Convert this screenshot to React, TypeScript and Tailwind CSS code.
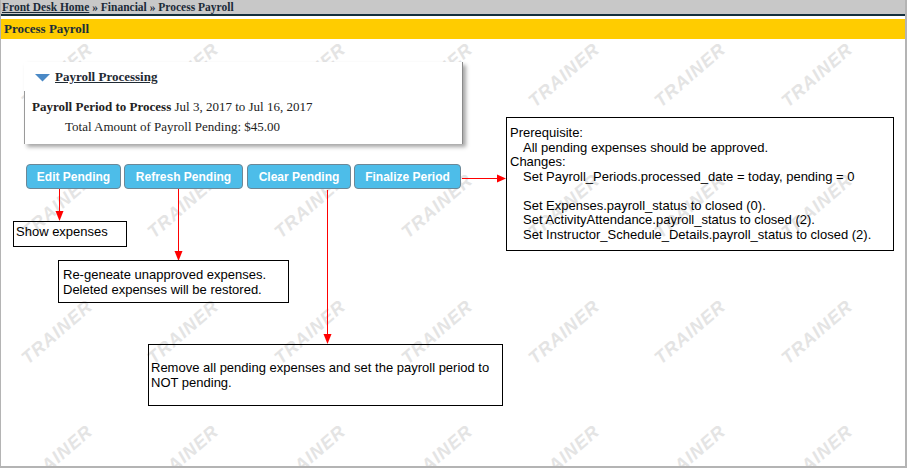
import React from "react";

const rows = [45, 176, 302, 427];
const cols = [94, 220, 347, 474, 601, 727, 854];

function Watermarks() {
  const items: { x: number; y: number; k: string }[] = [];
  rows.forEach((r) =>
    cols.forEach((c) => items.push({ x: c - 37 - 1, y: r + 29.5, k: `${r}-${c}` }))
  );
  return (
    <div className="pointer-events-none absolute inset-0">
      {items.map((it) => (
        <span
          key={it.k}
          className="absolute whitespace-nowrap text-[18px] font-bold italic leading-none tracking-[1px] text-[#e4e4e4]"
          style={{
            left: it.x,
            top: it.y,
            transform: "translate(-50%, -50%) rotate(-41deg)",
            fontFamily: '"Liberation Sans", Arial, sans-serif',
          }}
        >
          TRAINER
        </span>
      ))}
    </div>
  );
}

function Arrows() {
  return (
    <svg
      className="pointer-events-none absolute -left-px top-0"
      width={907}
      height={468}
      viewBox="0 0 907 468"
    >
      <g stroke="#ff0000" strokeWidth={1} fill="none">
        <line x1={59.5} y1={189} x2={59.5} y2={212} />
        <line x1={178.5} y1={189} x2={178.5} y2={252} />
        <line x1={327.5} y1={190} x2={327.5} y2={335} />
        <line x1={462} y1={178.5} x2={498} y2={178.5} />
      </g>
      <g fill="#ff0000">
        <polygon points="55.5,211 63.5,211 59.5,221" />
        <polygon points="174.5,251 182.5,251 178.5,261" />
        <polygon points="323.5,334 331.5,334 327.5,344" />
        <polygon points="497,174.5 497,182.5 506,178.5" />
      </g>
    </svg>
  );
}

const note = '"Liberation Sans", Arial, sans-serif';

export default function App() {
  return (
    <div
      className="relative h-[468px] w-[907px] overflow-hidden border-b-2 border-l border-r-2 border-[#b4b4b4] bg-white"
      style={{ fontFamily: '"Liberation Serif", "Times New Roman", serif' }}
    >
      <Watermarks />

      <div className="relative flex flex-col">
        {/* breadcrumb */}
        <div className="h-[14px] bg-[#c8c8c8] pl-[1px] text-[11.5px] font-bold leading-[14px] text-[#1c2b38]">
          <span className="underline">Front Desk Home</span> » Financial » Process Payroll
        </div>
        <div className="h-[2px] bg-[#15303c]" />
        <div className="h-[3px]" />
        <div className="h-[20px] bg-[#ffcc00] pl-[3px] text-[13px] font-bold leading-[20px] text-[#1b2f3a]">
          Process Payroll
        </div>

        {/* card */}
        <div className="ml-[23px] mt-[23px] flex h-[82px] w-[439px] flex-col border-r border-[#8a8a8a] bg-white shadow-[3px_3px_4px_rgba(0,0,0,0.35)]">
          <div className="flex h-[29px] items-center pl-[11px]">
            <svg width="15" height="8" viewBox="0 0 15 8" className="mt-[3px]">
              <polygon points="0,0 15,0 7.5,7.5" fill="#4a89c6" />
            </svg>
            <span className="ml-[5px] text-[13px] font-bold text-[#1f2a33] underline">
              Payroll Processing
            </span>
          </div>
          <div className="flex-1 border-l border-[#9a9a9a] pt-[6px] text-[13px] leading-[20px] text-[#222]">
            <div className="pl-[7px]">
              <span className="font-bold">Payroll Period to Process</span> Jul 3, 2017 to Jul 16, 2017
            </div>
            <div className="pl-[40px]">Total Amount of Payroll Pending: $45.00</div>
          </div>
        </div>

        {/* buttons */}
        <div
          className="ml-[25px] mt-[20px] flex text-[12px] font-bold text-white"
          style={{ fontFamily: note }}
        >
          <div className="flex h-[25px] w-[95px] items-center justify-center rounded-[4px] border border-[#6d8796] bg-[#4dbde9]">
            Edit Pending
          </div>
          <div className="ml-[3px] flex h-[25px] w-[119px] items-center justify-center rounded-[4px] border border-[#6d8796] bg-[#4dbde9]">
            Refresh Pending
          </div>
          <div className="ml-[4px] flex h-[25px] w-[104px] items-center justify-center rounded-[4px] border border-[#6d8796] bg-[#4dbde9]">
            Clear Pending
          </div>
          <div className="ml-[3px] flex h-[25px] w-[107px] items-center justify-center rounded-[4px] border border-[#6d8796] bg-[#4dbde9]">
            Finalize Period
          </div>
        </div>
      </div>

      <Arrows />

      {/* annotation boxes */}
      <div
        className="absolute left-[12px] top-[221px] h-[26px] w-[114px] border border-black pl-[2px] pt-[3px] text-[13px] leading-[14.5px] text-black"
        style={{ fontFamily: note }}
      >
        Show expenses
      </div>

      <div
        className="absolute left-[57px] top-[260px] h-[43px] w-[231px] border border-black pl-[4px] pt-[7px] text-[13px] leading-[14.5px] text-black"
        style={{ fontFamily: note }}
      >
        <div>Re-geneate unapproved expenses.</div>
        <div>Deleted expenses will be restored.</div>
      </div>

      <div
        className="absolute left-[147px] top-[344px] h-[62px] w-[355px] border border-black pl-[2px] pt-[16px] text-[13px] leading-[14.5px] text-black"
        style={{ fontFamily: note }}
      >
        <div>Remove all pending expenses and set the payroll period to</div>
        <div>NOT pending.</div>
      </div>

      <div
        className="absolute left-[505px] top-[117px] h-[134px] w-[388px] border border-black pl-[3px] pt-[8px] text-[13px] leading-[14.5px] text-black"
        style={{ fontFamily: note }}
      >
        <div>Prerequisite:</div>
        <div className="pl-[13px]">All pending expenses should be approved.</div>
        <div>Changes:</div>
        <div className="pl-[13px]">Set Payroll_Periods.processed_date = today, pending = 0</div>
        <div className="h-[14.5px]" />
        <div className="pl-[13px]">Set Expenses.payroll_status to closed (0).</div>
        <div className="pl-[13px]">Set ActivityAttendance.payroll_status to closed (2).</div>
        <div className="pl-[13px]">Set Instructor_Schedule_Details.payroll_status to closed (2).</div>
      </div>
    </div>
  );
}
